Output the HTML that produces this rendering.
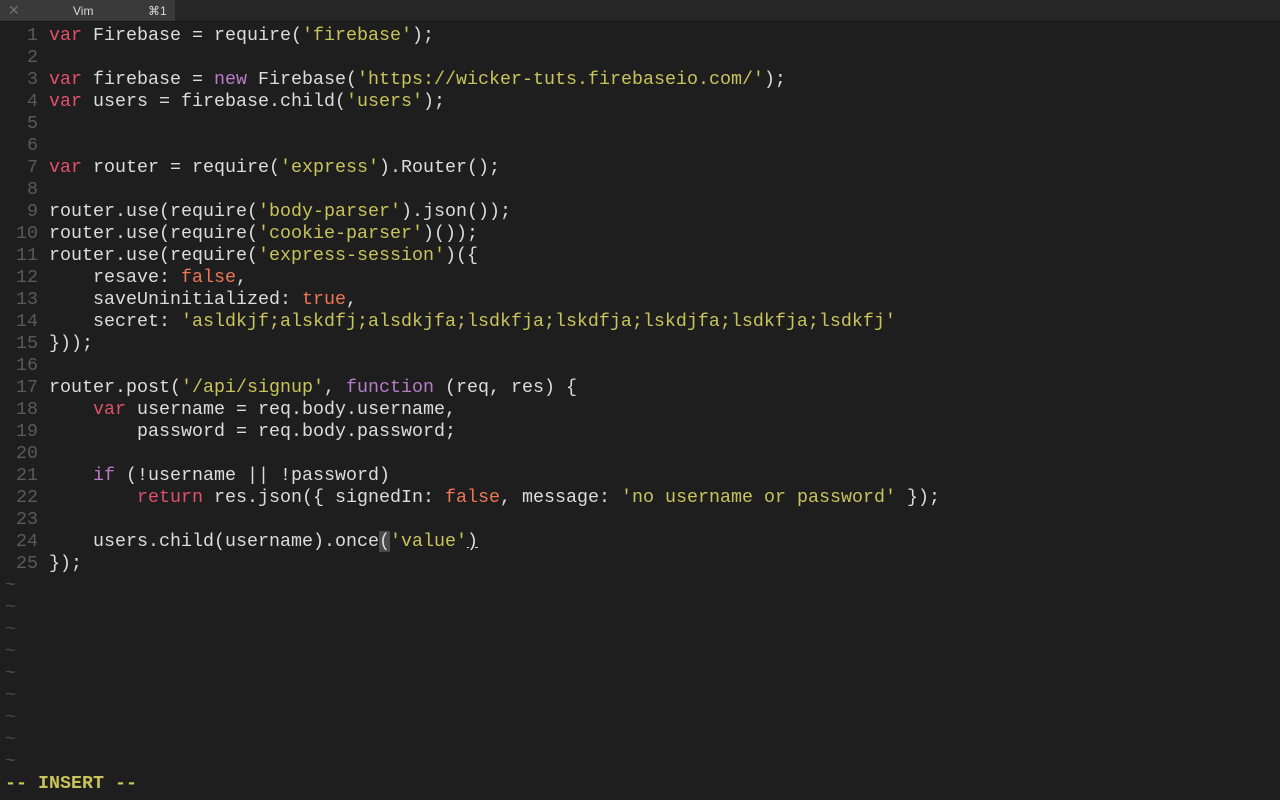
<!DOCTYPE html>
<html><head><meta charset="utf-8"><style>
html,body{margin:0;padding:0;background:#1e1e1f;width:1280px;height:800px;overflow:hidden}
.bar{position:absolute;left:0;top:0;width:1280px;height:21px;background:#262626;border-bottom:1px solid #151515}
.tab{position:absolute;left:0;top:0;width:175px;height:21px;background:#3a3a3b;font:12px "Liberation Sans",sans-serif;color:#d8d8d8}
.tab .x{position:absolute;left:8px;top:2px;color:#707070;font-size:14px}
.tab .ti{position:absolute;left:73px;top:4px;color:#d8d8d8}
.tab .k{position:absolute;left:148px;top:4px}
pre{position:absolute;left:5px;top:25px;margin:0;font:18.33px/22px "Liberation Mono",monospace;color:#dcdcdc;white-space:pre}
.n{color:#5a5a5a}.r{color:#e0506a}.p{color:#b77cc9}.s{color:#c8c35a}.o{color:#ee7655}.tl{color:#4a4a4a}
.m{color:#c8c35a;font-weight:bold}
.hl{background:#4a4a4a}.cu{text-decoration:underline}
</style></head><body>
<div class="bar"><div class="tab"><span class="x">✕</span><span class="ti">Vim</span><span class="k">⌘1</span></div></div>
<pre><span class="n">  1 </span><span class="r">var</span> Firebase = require(<span class="s">'firebase'</span>);
<span class="n">  2 </span>
<span class="n">  3 </span><span class="r">var</span> firebase = <span class="p">new</span> Firebase(<span class="s">'https://wicker-tuts.firebaseio.com/'</span>);
<span class="n">  4 </span><span class="r">var</span> users = firebase.child(<span class="s">'users'</span>);
<span class="n">  5 </span>
<span class="n">  6 </span>
<span class="n">  7 </span><span class="r">var</span> router = require(<span class="s">'express'</span>).Router();
<span class="n">  8 </span>
<span class="n">  9 </span>router.use(require(<span class="s">'body-parser'</span>).json());
<span class="n"> 10 </span>router.use(require(<span class="s">'cookie-parser'</span>)());
<span class="n"> 11 </span>router.use(require(<span class="s">'express-session'</span>)({
<span class="n"> 12 </span>    resave: <span class="o">false</span>,
<span class="n"> 13 </span>    saveUninitialized: <span class="o">true</span>,
<span class="n"> 14 </span>    secret: <span class="s">'asldkjf;alskdfj;alsdkjfa;lsdkfja;lskdfja;lskdjfa;lsdkfja;lsdkfj'</span>
<span class="n"> 15 </span>}));
<span class="n"> 16 </span>
<span class="n"> 17 </span>router.post(<span class="s">'/api/signup'</span>, <span class="p">function</span> (req, res) {
<span class="n"> 18 </span>    <span class="r">var</span> username = req.body.username,
<span class="n"> 19 </span>        password = req.body.password;
<span class="n"> 20 </span>
<span class="n"> 21 </span>    <span class="p">if</span> (!username || !password)
<span class="n"> 22 </span>        <span class="r">return</span> res.json({ signedIn: <span class="o">false</span>, message: <span class="s">'no username or password'</span> });
<span class="n"> 23 </span>
<span class="n"> 24 </span>    users.child(username).once<span class="hl">(</span><span class="s">'value'</span><span class="cu">)</span>
<span class="n"> 25 </span>});
<span class="tl">~</span>
<span class="tl">~</span>
<span class="tl">~</span>
<span class="tl">~</span>
<span class="tl">~</span>
<span class="tl">~</span>
<span class="tl">~</span>
<span class="tl">~</span>
<span class="tl">~</span>
<span class="m">-- INSERT --</span></pre>
</body></html>
